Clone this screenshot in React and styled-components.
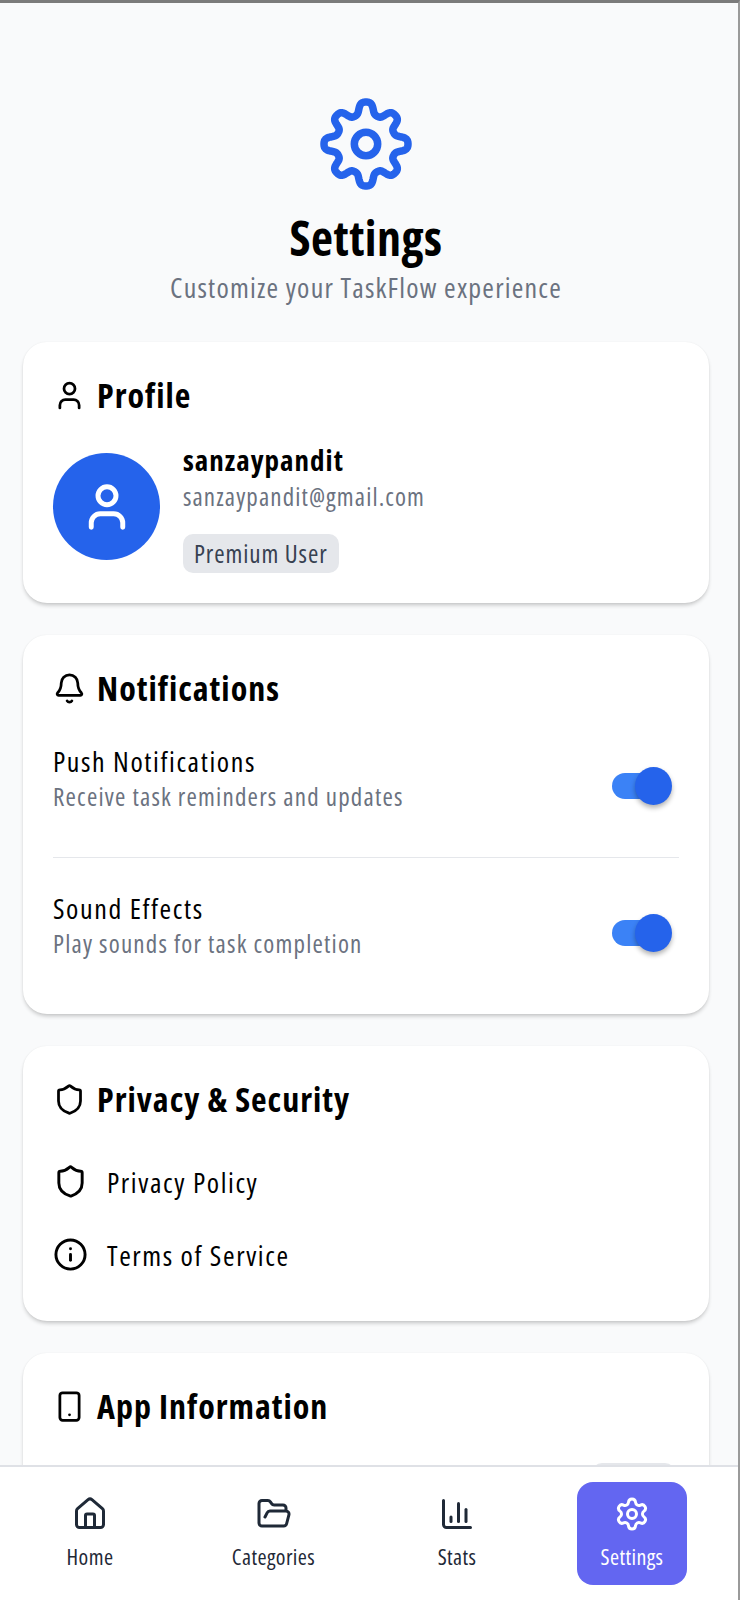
import React from "react";
import styled, { createGlobalStyle } from "styled-components";
import { Bell, ChartColumn, FolderOpen, House, Info, Settings, Shield, Smartphone, User } from "lucide-react";

const GlobalStyle = createGlobalStyle`
    html, body {
        margin: 0;
        height: 100%;
        background: #f9fafb;
    }
    body {
        font-family: "Open Sans", "Noto Sans", "Liberation Sans", sans-serif;
        font-stretch: 75%;
        color: #000;
    }
`;

const Frame = styled.div`
    position: relative;
    height: 100vh;
    overflow: hidden;
    box-sizing: border-box;
    border-top: 3px solid #7b7b7b;
    border-right: 2px solid #9a9a9a;
`;

const Page = styled.div`
    padding: 0 29px 0 23px;
`;

const Header = styled.header`
    display: flex;
    flex-direction: column;
    align-items: center;
    padding-top: 93px;
    margin-bottom: 38px;
`;

const HeroIcon = styled.svg`
    width: 96px;
    height: 96px;
    display: block;
    fill: none;
    stroke: #2563eb;
    stroke-width: 7.5;
`;

const PageTitle = styled.h1`
    margin: 18px 0 0;
    font-size: 48px;
    line-height: 56px;
    letter-spacing: 0.5px;
    font-weight: 700;
`;

const Subtitle = styled.p`
    margin: 4px 0 0;
    font-size: 28px;
    line-height: 34px;
    letter-spacing: 1.2px;
    color: #6b7280;
`;

const Card = styled.section`
    background: #fff;
    border-radius: 24px;
    padding: 30px;
    margin-bottom: 32px;
    box-shadow: 0 3px 4px -1px rgba(0, 0, 0, 0.22), 0 0 2px rgba(0, 0, 0, 0.06);
`;

const CardHeader = styled.div`
    display: flex;
    align-items: center;
    gap: 11px;
    height: 46px;
    margin-bottom: ${(p) => p.$gap}px;
    svg {
        flex: none;
    }
`;

const CardTitle = styled.h2`
    margin: 0;
    font-size: 34px;
    line-height: 46px;
    letter-spacing: 1px;
    font-weight: 700;
`;

const ProfileRow = styled.div`
    display: flex;
    gap: 23px;
    align-items: flex-start;
`;

const Avatar = styled.div`
    flex: none;
    width: 107px;
    height: 107px;
    margin-top: 11px;
    border-radius: 50%;
    background: #2563eb;
    color: #fff;
    display: flex;
    align-items: center;
    justify-content: center;
`;

const ProfileName = styled.div`
    font-size: 29px;
    line-height: 36px;
    letter-spacing: 1px;
    font-weight: 700;
`;

const ProfileEmail = styled.div`
    font-size: 25px;
    line-height: 32px;
    letter-spacing: 1.1px;
    color: #6b7280;
    margin-top: 2px;
`;

const Chip = styled.div`
    width: fit-content;
    margin-top: 22px;
    padding: 0 11px;
    height: 39px;
    line-height: 39px;
    border-radius: 10px;
    background: #e5e7eb;
    color: #374151;
    font-size: 25px;
    letter-spacing: 0.9px;
`;

const ToggleRow = styled.div`
    display: flex;
    align-items: center;
    justify-content: space-between;
    padding: 33px 0 ${(p) => (p.$last ? 25 : 45)}px;
    border-bottom: ${(p) => (p.$last ? "none" : "1px solid #e5e7eb")};
`;

const RowLabel = styled.div`
    font-size: 28px;
    line-height: 34px;
    letter-spacing: 1.6px;
`;

const RowHint = styled.div`
    font-size: 25px;
    line-height: 32px;
    letter-spacing: 1.2px;
    margin-top: 2px;
    color: #6b7280;
`;

const Toggle = styled.div`
    position: relative;
    width: 48px;
    height: 26px;
    margin: 16px 19px 0 0;
    border-radius: 13px;
    background: #3b82f6;
    &::after {
        content: "";
        position: absolute;
        left: 23px;
        top: -6px;
        width: 37px;
        height: 38px;
        border-radius: 50%;
        background: #2563eb;
        box-shadow: 0 3px 5px rgba(0, 0, 0, 0.3);
    }
`;

const LinkRow = styled.div`
    display: flex;
    align-items: center;
    gap: 19px;
    height: 73px;
    font-size: 28px;
    letter-spacing: 1.6px;
    svg {
        flex: none;
    }
`;

const VersionRow = styled.div`
    display: flex;
    justify-content: flex-end;
    padding: 34px 4px 0 0;
`;

const VersionChip = styled.div`
    width: 83px;
    height: 39px;
    border-radius: 10px;
    background: #e5e7eb;
`;

const BottomNav = styled.nav`
    position: absolute;
    left: 0;
    right: 0;
    bottom: 0;
    height: 135px;
    box-sizing: border-box;
    background: #fff;
    border-top: 2px solid #dfe1e6;
    display: flex;
    justify-content: space-between;
    align-items: flex-start;
    padding: 15px 51px 0 46px;
`;

const NavItem = styled.div`
    width: ${(p) => p.$width}px;
    height: 103px;
    border-radius: 16px;
    display: flex;
    flex-direction: column;
    align-items: center;
    gap: 11px;
    padding-top: 14px;
    box-sizing: border-box;
    font-size: 22px;
    line-height: 26px;
    letter-spacing: 0.4px;
    color: ${(p) => (p.$active ? "#fff" : "#1f2937")};
    background: ${(p) => (p.$active ? "#6366f1" : "transparent")};
`;

const navItems = [
    { label: "Home", icon: House, width: 88 },
    { label: "Categories", icon: FolderOpen, width: 127 },
    { label: "Stats", icon: ChartColumn, width: 88 },
    { label: "Settings", icon: Settings, width: 110, active: true },
];

// eight rounded lobes: tanh flattens the tips and valleys of the wave
const gearPath = () => {
    const points = [];
    const k = 1.6;
    for (let i = 0; i < 320; i++) {
        const a = (i / 320) * Math.PI * 2;
        const wave = Math.tanh(k * Math.cos(8 * a)) / Math.tanh(k);
        const r = 35.7 + 5.8 * wave + 0.5 * Math.cos(4 * a);
        points.push(`${(r * Math.cos(a)).toFixed(2)} ${(r * Math.sin(a)).toFixed(2)}`);
    }
    return `M${points.join("L")}Z`;
};

export default function App() {
    return (
        <Frame>
            <GlobalStyle />
            <Page>
                <Header>
                    <HeroIcon viewBox="-48 -48 96 96" strokeLinejoin="round">
                        <path d={gearPath()} />
                        <circle cx="0" cy="0" r="11.7" />
                    </HeroIcon>
                    <PageTitle>Settings</PageTitle>
                    <Subtitle>Customize your TaskFlow experience</Subtitle>
                </Header>

                <Card>
                    <CardHeader $gap={24}>
                        <User size={33} strokeWidth={2} />
                        <CardTitle>Profile</CardTitle>
                    </CardHeader>
                    <ProfileRow>
                        <Avatar>
                            <User size={54} strokeWidth={2.2} />
                        </Avatar>
                        <div>
                            <ProfileName>sanzaypandit</ProfileName>
                            <ProfileEmail>sanzaypandit@gmail.com</ProfileEmail>
                            <Chip>Premium User</Chip>
                        </div>
                    </ProfileRow>
                </Card>

                <Card>
                    <CardHeader $gap={0}>
                        <Bell size={33} strokeWidth={2} />
                        <CardTitle>Notifications</CardTitle>
                    </CardHeader>
                    <ToggleRow>
                        <div>
                            <RowLabel>Push Notifications</RowLabel>
                            <RowHint>Receive task reminders and updates</RowHint>
                        </div>
                        <Toggle />
                    </ToggleRow>
                    <ToggleRow $last>
                        <div>
                            <RowLabel>Sound Effects</RowLabel>
                            <RowHint>Play sounds for task completion</RowHint>
                        </div>
                        <Toggle />
                    </ToggleRow>
                </Card>

                <Card>
                    <CardHeader $gap={23}>
                        <Shield size={33} strokeWidth={2} />
                        <CardTitle>Privacy &amp; Security</CardTitle>
                    </CardHeader>
                    <LinkRow>
                        <Shield size={35} strokeWidth={2} />
                        Privacy Policy
                    </LinkRow>
                    <LinkRow>
                        <Info size={35} strokeWidth={2} />
                        Terms of Service
                    </LinkRow>
                </Card>

                <Card>
                    <CardHeader $gap={0}>
                        <Smartphone size={33} strokeWidth={2} />
                        <CardTitle>App Information</CardTitle>
                    </CardHeader>
                    <VersionRow>
                        <VersionChip />
                    </VersionRow>
                </Card>
            </Page>

            <BottomNav>
                {navItems.map((item) => (
                    <NavItem key={item.label} $width={item.width} $active={item.active}>
                        <item.icon size={36} strokeWidth={2} />
                        {item.label}
                    </NavItem>
                ))}
            </BottomNav>
        </Frame>
    );
}
